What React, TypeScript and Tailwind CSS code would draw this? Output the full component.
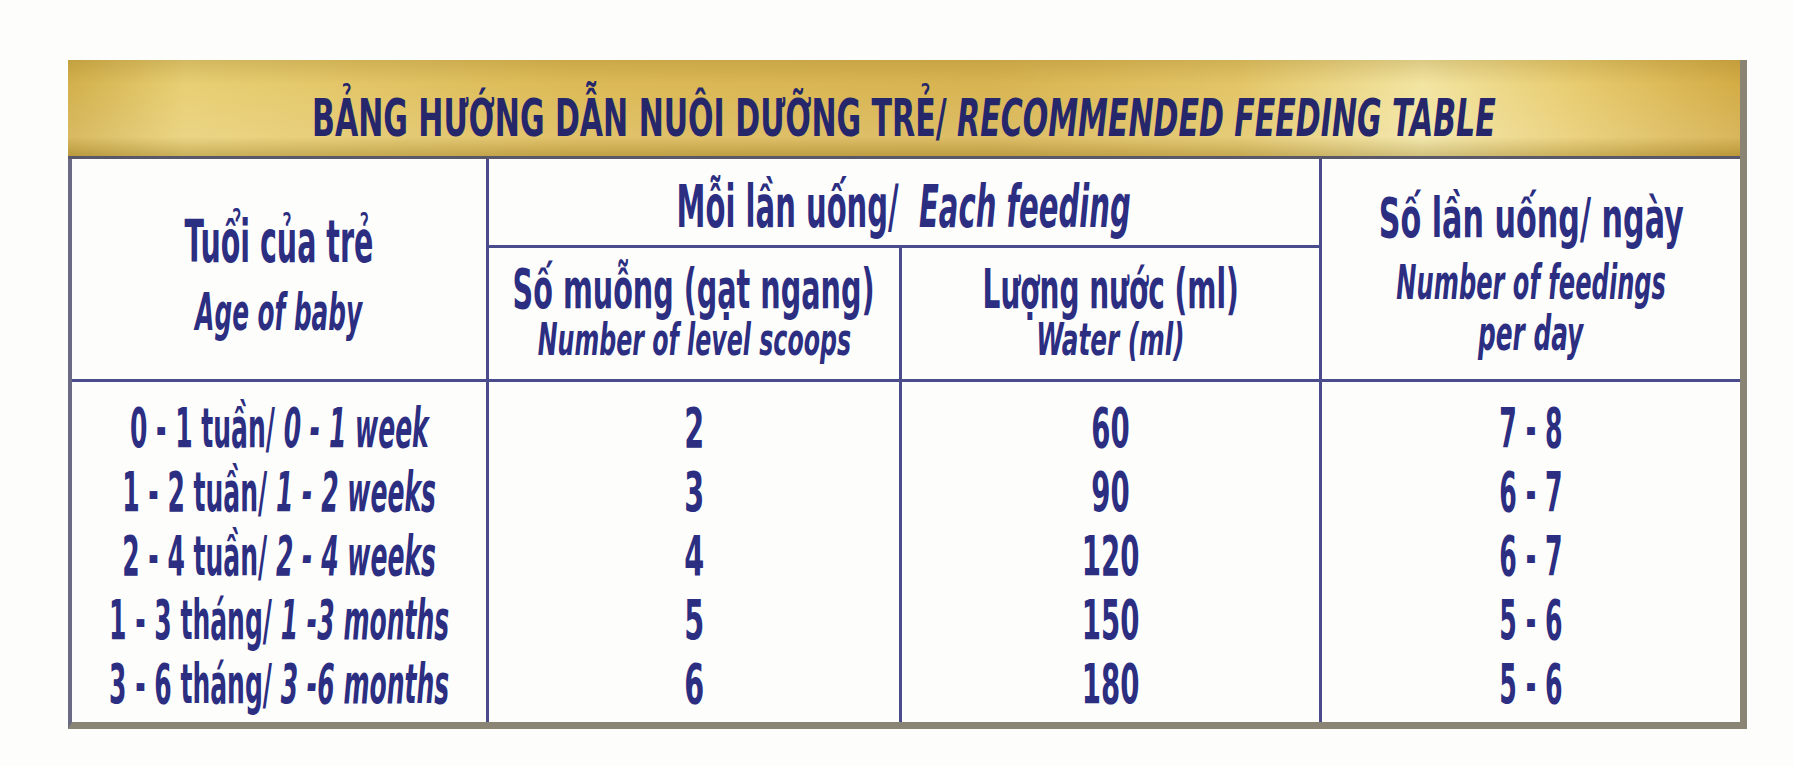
import React from "react";

const ink = "text-[#2c2e82]";

function Sq({ children, className = "" }: { children: React.ReactNode; className?: string }) {
  // condensed look: narrow font squeezed a bit more
  return <span className={`inline-block whitespace-nowrap origin-center ${className}`}>{children}</span>;
}

function Line({ children, className = "" }: { children: React.ReactNode; className?: string }) {
  return <div className={`flex justify-center whitespace-nowrap ${className}`}>{children}</div>;
}

const ages: [string, string][] = [
  ["0 - 1 tuần/", "0 - 1 week"],
  ["1 - 2 tuần/", "1 - 2 weeks"],
  ["2 - 4 tuần/", "2 - 4 weeks"],
  ["1 - 3 tháng/", "1 -3 months"],
  ["3 - 6 tháng/", "3 -6 months"],
];
const scoops = ["2", "3", "4", "5", "6"];
const water = ["60", "90", "120", "150", "180"];
const perDay = ["7 - 8", "6 - 7", "6 - 7", "5 - 6", "5 - 6"];

export default function App() {
  return (
    <div className={`min-h-[765px] bg-[#fdfdfb] pt-[60px] font-['DejaVu_Sans_Condensed','DejaVu_Sans',sans-serif] font-bold ${ink}`}>
      <div className="ml-[68px] w-[1679px] border-r-[7px] border-[#8a8474]">
        {/* gold title band */}
        <div className="h-[99px] border-b-[3px] border-[#59586b] bg-[linear-gradient(180deg,rgba(140,105,25,0.22)_0%,rgba(255,255,255,0)_25%,rgba(255,255,255,0.12)_80%,rgba(110,85,20,0.25)_100%),linear-gradient(90deg,#d2b04b_0%,#e8cf74_7%,#dcba56_30%,#d8b451_55%,#e3c566_70%,#f2e5a2_81%,#e8cc70_90%,#d3ac45_100%)] pt-[29px]">
          <Line className="leading-[60px] text-[51px] text-[#25276a]">
            <Sq className="scale-x-[0.654]">
              BẢNG HƯỚNG DẪN NUÔI DƯỠNG TRẺ/ <i>RECOMMENDED FEEDING TABLE</i>
            </Sq>
          </Line>
        </div>

        <div className="border-l-4 border-b-[7px] border-l-[#6b6b85] border-b-[#8a8474]">
          {/* header */}
          <div className="grid grid-cols-[417px_413px_420px_418px] grid-rows-[89px_131px] border-b-[3px] border-[#4b4c8c]">
            <div className="row-span-2 border-r-[3px] border-[#4b4c8c] pt-[48px]">
              <Line className="leading-[70px] text-[59px]">
                <Sq className="scale-x-[0.537]">Tuổi của trẻ</Sq>
              </Line>
              <Line className="leading-[72px] text-[51px] italic">
                <Sq className="scale-x-[0.539]">Age of baby</Sq>
              </Line>
            </div>
            <div className="col-span-2 border-r-[3px] border-b-[3px] border-[#4b4c8c] pt-[8px]">
              <Line className="leading-[80px] text-[58px]">
                <Sq className="scale-x-[0.557]">
                  Mỗi lần uống/&nbsp; <i>Each feeding</i>
                </Sq>
              </Line>
            </div>
            <div className="row-span-2 pt-[21px]">
              <Line className="leading-[76px] text-[56px]">
                <Sq className="scale-x-[0.6]">Số lần uống/ ngày</Sq>
              </Line>
              <Line className="leading-[52px] text-[48px] italic">
                <Sq className="scale-x-[0.559]">Number of feedings</Sq>
              </Line>
              <Line className="leading-[50px] text-[48px] italic">
                <Sq className="scale-x-[0.574]">per day</Sq>
              </Line>
            </div>
            <div className="border-r-[3px] border-[#4b4c8c] pt-[16px]">
              <Line className="leading-[50px] text-[55px]">
                <Sq className="scale-x-[0.579]">Số muỗng (gạt ngang)</Sq>
              </Line>
              <Line className="leading-[52px] text-[45px] italic">
                <Sq className="scale-x-[0.586]">Number of level scoops</Sq>
              </Line>
            </div>
            <div className="border-r-[3px] border-[#4b4c8c] pt-[16px]">
              <Line className="leading-[50px] text-[55px]">
                <Sq className="scale-x-[0.565]">Lượng nước (ml)</Sq>
              </Line>
              <Line className="leading-[52px] text-[45px] italic">
                <Sq className="scale-x-[0.61]">Water (ml)</Sq>
              </Line>
            </div>
          </div>

          {/* body */}
          <div className="grid h-[340px] grid-cols-[417px_413px_420px_418px] text-[55px] leading-[64px]">
            <div className="border-r-[3px] border-[#4b4c8c] pt-[14px]">
              {ages.map(([vi, en]) => (
                <Line key={vi}>
                  <Sq className="scale-x-[0.506]">
                    {vi} <i>{en}</i>
                  </Sq>
                </Line>
              ))}
            </div>
            <div className="border-r-[3px] border-[#4b4c8c] pt-[14px]">
              {scoops.map((s) => (
                <Line key={s}>
                  <Sq className="scale-x-[0.58]">{s}</Sq>
                </Line>
              ))}
            </div>
            <div className="border-r-[3px] border-[#4b4c8c] pt-[14px]">
              {water.map((w) => (
                <Line key={w}>
                  <Sq className="scale-x-[0.558]">{w}</Sq>
                </Line>
              ))}
            </div>
            <div className="pt-[14px]">
              {perDay.map((p, i) => (
                <Line key={i}>
                  <Sq className="scale-x-[0.51]">{p}</Sq>
                </Line>
              ))}
            </div>
          </div>
        </div>
      </div>
    </div>
  );
}
